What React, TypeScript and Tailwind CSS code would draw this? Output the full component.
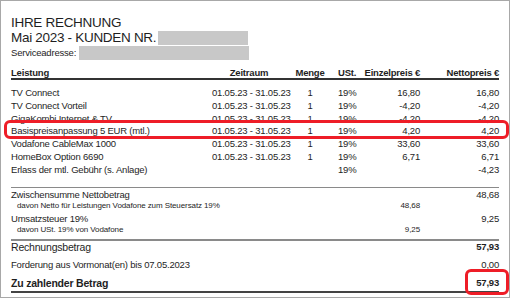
import React from 'react';

type Item = {
    name: string;
    period?: string;
    qty?: string;
    vat: string;
    unit?: string;
    net: string;
};

const items: Item[] = [
    { name: 'TV Connect', period: '01.05.23 - 31.05.23', qty: '1', vat: '19%', unit: '16,80', net: '16,80' },
    { name: 'TV Connect Vorteil', period: '01.05.23 - 31.05.23', qty: '1', vat: '19%', unit: '-4,20', net: '-4,20' },
    { name: 'GigaKombi Internet & TV', period: '01.05.23 - 31.05.23', qty: '1', vat: '19%', unit: '-4,20', net: '-4,20' },
    { name: 'Basispreisanpassung 5 EUR (mtl.)', period: '01.05.23 - 31.05.23', qty: '1', vat: '19%', unit: '4,20', net: '4,20' },
    { name: 'Vodafone CableMax 1000', period: '01.05.23 - 31.05.23', qty: '1', vat: '19%', unit: '33,60', net: '33,60' },
    { name: 'HomeBox Option 6690', period: '01.05.23 - 31.05.23', qty: '1', vat: '19%', unit: '6,71', net: '6,71' },
    { name: 'Erlass der mtl. Gebühr (s. Anlage)', vat: '19%', net: '-4,23' },
];

const cols = 'grid grid-cols-[201px_79px_38px_34px_57px_79px] items-center';
const sumCols = 'grid grid-cols-[352px_57px_79px] items-center';

export default function App() {
    return (
        <div className="relative w-[512px] h-[300px] bg-white font-['Liberation_Sans',Arial,sans-serif] text-[#1e1e1e]">
            <div className="w-[510px] h-[298px] border border-[#a8a8a8] pl-[10px] pt-[14px]">
                {/* head */}
                <div className="text-[13.5px] leading-[15px] tracking-[-0.3px]">IHRE RECHNUNG</div>
                <div className="flex items-center h-[15px] text-[13.5px] leading-[15px] tracking-[-0.3px]">
                    <span>Mai 2023 - KUNDEN NR.</span>
                    <div className="ml-[2px] w-[90px] h-[14px] bg-[#c8c8c8]"></div>
                </div>
                <div className="flex items-center h-[14px] mt-[1px] text-[9.5px] tracking-[-0.2px]">
                    <span>Serviceadresse:</span>
                    <div className="ml-[3px] w-[170px] h-[14px] bg-[#c8c8c8]"></div>
                </div>

                {/* table */}
                <div className="w-[488px] mt-[6px] text-[9.5px] tracking-[-0.2px]">
                    <div className={`${cols} h-[11px] font-bold border-b-2 border-[#333] box-content pb-[1px]`}>
                        <span>Leistung</span>
                        <span className="text-center pr-[5px]">Zeitraum</span>
                        <span className="text-center">Menge</span>
                        <span className="pl-[9px]">USt.</span>
                        <span className="text-right">Einzelpreis €</span>
                        <span className="text-right">Nettopreis €</span>
                    </div>
                    <div className="mt-[7px]">
                        {items.map((it) => (
                            <div key={it.name} className={`${cols} h-[12.8px] leading-[12.8px]`}>
                                <span>{it.name}</span>
                                <span>{it.period}</span>
                                <span className="text-center">{it.qty}</span>
                                <span className="pl-[9px]">{it.vat}</span>
                                <span className="text-right">{it.unit}</span>
                                <span className="text-right">{it.net}</span>
                            </div>
                        ))}
                    </div>

                    {/* sums */}
                    <div className="mt-[10px] border-t border-[#8a8a8a]">
                        <div className={`${sumCols} h-[12px]`}>
                            <span>Zwischensumme Nettobetrag</span>
                            <span></span>
                            <span className="text-right">48,68</span>
                        </div>
                        <div className={`${sumCols} h-[12px] text-[8px] tracking-[-0.1px]`}>
                            <span className="pl-[6px]">davon Netto für Leistungen Vodafone zum Steuersatz 19%</span>
                            <span className="text-right">48,68</span>
                            <span></span>
                        </div>
                        <div className={`${sumCols} h-[12px]`}>
                            <span>Umsatzsteuer 19%</span>
                            <span></span>
                            <span className="text-right">9,25</span>
                        </div>
                        <div className={`${sumCols} h-[11px] text-[8px] tracking-[-0.1px]`}>
                            <span className="pl-[6px]">davon USt. 19% von Vodafone</span>
                            <span className="text-right">9,25</span>
                            <span></span>
                        </div>
                    </div>
                    <div className="mt-[4px] border-t-2 border-[#8a8a8a]">
                        <div className="flex items-center justify-between h-[14px]">
                            <span className="text-[10.5px]">Rechnungsbetrag</span>
                            <span className="font-bold">57,93</span>
                        </div>
                        <div className="flex items-center justify-between h-[14px] mt-[4px]">
                            <span>Forderung aus Vormonat(en) bis 07.05.2023</span>
                            <span>0,00</span>
                        </div>
                        <div className="flex items-center justify-between h-[14px] mt-[4px] border-b-2 border-[#444] box-content">
                            <span className="text-[10.5px] font-bold">Zu zahlender Betrag</span>
                            <span className="font-bold">57,93</span>
                        </div>
                    </div>
                </div>
            </div>

            {/* highlight marks */}
            <div className="absolute left-[4px] top-[120px] w-[505px] h-[19px] border-[3px] border-[#ee1d27] rounded-[6px]"></div>
            <div className="absolute left-[465px] top-[269px] w-[44px] h-[26px] border-[3px] border-[#ee1d27] rounded-[6px]"></div>
        </div>
    );
}
